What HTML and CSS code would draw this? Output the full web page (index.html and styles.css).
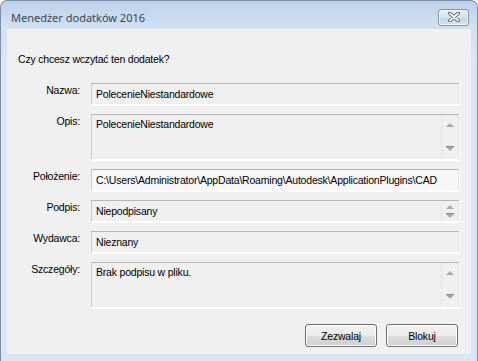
FILE: index.html
```html
<!DOCTYPE html>
<html lang="pl">
<head>
    <meta charset="UTF-8">
    <title>Menedżer dodatków 2016</title>
    <link rel="stylesheet" href="styles.css">
</head>
<body>
    <div class="window">
        <!-- Title bar -->
        <div class="titlebar">
            <span class="title">Menedżer dodatków 2016</span>
            <button class="close-btn" aria-label="Zamknij">
                <svg width="12" height="10" viewBox="0 0 12 10">
                    <path d="M2 1.5 L10 8.5 M10 1.5 L2 8.5" stroke="#4e5663" stroke-width="3.6" stroke-linecap="round"/>
                    <path d="M2 1.5 L10 8.5 M10 1.5 L2 8.5" stroke="#ffffff" stroke-width="1.8" stroke-linecap="round"/>
                </svg>
            </button>
        </div>

        <!-- Client area -->
        <div class="client">
            <p class="question">Czy chcesz wczytać ten dodatek?</p>

            <div class="form">
                <label class="label">Nazwa:</label>
                <div class="field"><span class="field-text">PolecenieNiestandardowe</span></div>

                <label class="label">Opis:</label>
                <div class="field field-tall">
                    <span class="field-text">PolecenieNiestandardowe</span>
                    <div class="scroll">
                        <span class="arrow-up"></span>
                        <span class="arrow-down"></span>
                    </div>
                </div>

                <label class="label">Położenie:</label>
                <div class="field field-light"><span class="field-text">C:\Users\Administrator\AppData\Roaming\Autodesk\ApplicationPlugins\CAD</span></div>

                <label class="label">Podpis:</label>
                <div class="field">
                    <span class="field-text">Niepodpisany</span>
                    <div class="scroll scroll-small">
                        <span class="arrow-up"></span>
                        <span class="arrow-down"></span>
                    </div>
                </div>

                <label class="label">Wydawca:</label>
                <div class="field"><span class="field-text">Nieznany</span></div>

                <label class="label">Szczegóły:</label>
                <div class="field field-tall">
                    <span class="field-text">Brak podpisu w pliku.</span>
                    <div class="scroll">
                        <span class="arrow-up"></span>
                        <span class="arrow-down"></span>
                    </div>
                </div>
            </div>

            <!-- Dialog buttons -->
            <div class="actions">
                <button class="dlg-btn">Zezwalaj</button>
                <button class="dlg-btn">Blokuj</button>
            </div>
        </div>
    </div>
</body>
</html>
```

FILE: styles.css
```css
body {
    margin: 0;
    font-family: "Liberation Sans", Arial, sans-serif;
    font-size: 10.5px;
    letter-spacing: -0.2px;
    color: #000;
}
.window {
    width: 478px;
    height: 361px;
    box-sizing: border-box;
    border: 1px solid #7d8ea3;
    border-bottom: none;
    border-radius: 7px 7px 0 0;
    background: linear-gradient(#bcd1e9, #d3e2f1 28px, #dae6f3 60px, #dae6f3);
    overflow: hidden;
}
.titlebar {
    height: 28px;
    box-sizing: border-box;
    padding: 4px 8px 0 10px;
    display: flex;
    align-items: center;
    justify-content: space-between;
}
.title {
    font-family: "Noto Sans", sans-serif;
    font-size: 11px;
    letter-spacing: 0;
    color: #3a4553;
}
.close-btn {
    width: 31px;
    height: 17px;
    padding: 0;
    border: 1px solid #8393a8;
    border-radius: 3px;
    background: linear-gradient(#e7eef7, #d6e1ee 50%, #c8d6e6 51%, #d5e1ee);
    box-shadow: inset 0 0 0 1px rgba(255, 255, 255, 0.6);
    display: flex;
    align-items: center;
    justify-content: center;
}
.client {
    margin-left: 6px;
    width: 464px;
    height: 325px;
    box-sizing: border-box;
    background-color: #f0f0f0;
    padding: 23px 12px 0 11px;
}
.question {
    margin: 0;
    line-height: 14px;
}
.form {
    margin-top: 17px;
    display: grid;
    grid-template-columns: 62px 368px;
    column-gap: 11px;
    row-gap: 9px;
}
.label {
    text-align: right;
    line-height: 14px;
}
.field {
    height: 22px;
    box-sizing: border-box;
    border: 1px solid;
    border-color: #b5b5b5 #e2e2e2 #fdfdfd #cbcbcb;
    box-shadow: 1px 1px 0 #fff;
    background-color: #f0f0f0;
    display: flex;
    overflow: hidden;
}
.field-tall {
    height: 46px;
}
.field-light {
    background-color: #f7f7f7;
}
.field-text {
    flex: 1;
    padding: 3px 2px 0 4px;
    line-height: 14px;
    white-space: nowrap;
    overflow: hidden;
}
.field-tall .field-text {
    padding-top: 2px;
}
.scroll {
    width: 16px;
    border-left: 1px solid #e4e4e4;
    display: flex;
    flex-direction: column;
    justify-content: space-between;
    align-items: center;
    padding: 8px 0;
}
.scroll-small {
    padding: 4px 0 3px 0;
}
.arrow-up, .arrow-down {
    width: 0;
    height: 0;
    border-left: 4px solid transparent;
    border-right: 4px solid transparent;
}
.arrow-up {
    border-bottom: 4px solid #a9a9a9;
}
.arrow-down {
    border-top: 4px solid #a9a9a9;
    box-shadow: 0 -1px 0 #8c8c8c;
}
.actions {
    margin-top: 16px;
    margin-right: 1px;
    display: flex;
    justify-content: flex-end;
    gap: 9px;
}
.dlg-btn {
    width: 72px;
    height: 23px;
    padding: 0;
    font-family: "Liberation Sans", Arial, sans-serif;
    font-size: 10.5px;
    letter-spacing: -0.2px;
    color: #000;
    border: 1px solid #707070;
    border-radius: 3px;
    background: linear-gradient(#f2f2f2, #ebebeb 50%, #dddddd 51%, #cfcfcf);
    box-shadow: inset 0 0 0 1px #fbfbfb;
}
```
